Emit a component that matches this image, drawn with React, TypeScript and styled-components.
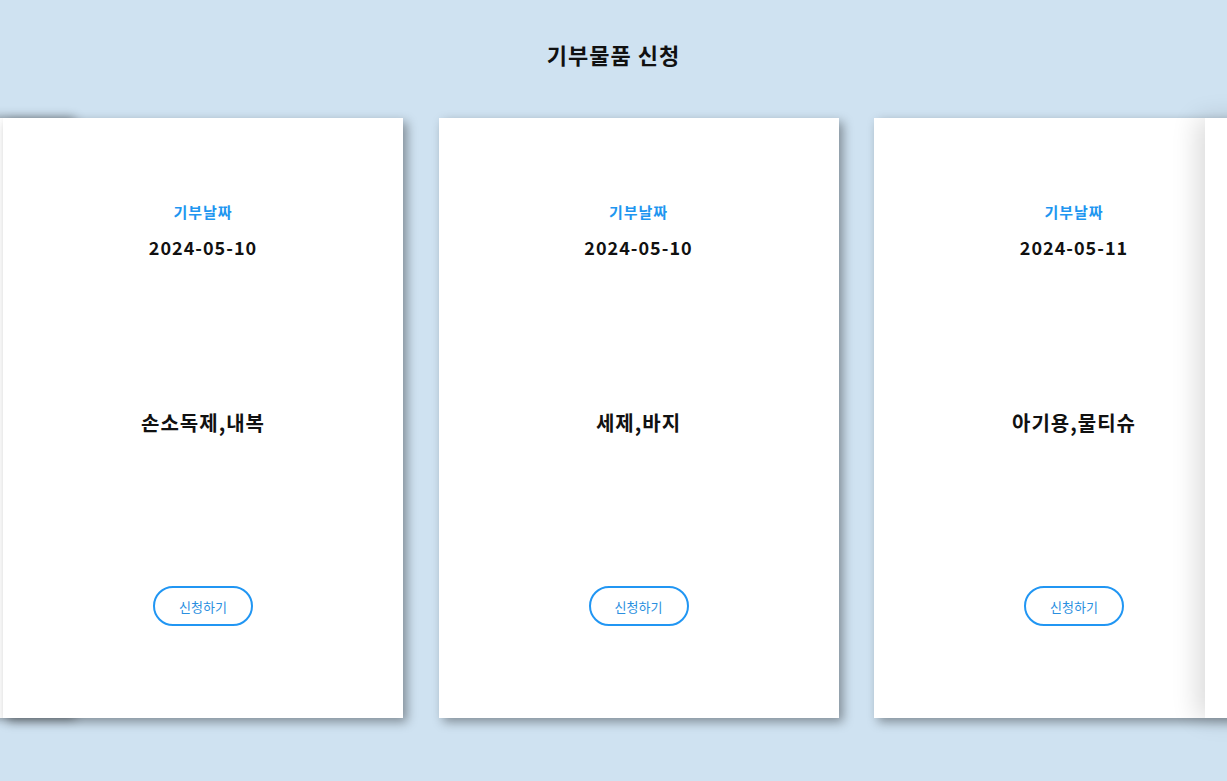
import React from 'react'
import styled, { createGlobalStyle } from 'styled-components'

const GlobalStyle = createGlobalStyle`
  html, body {
    margin: 0;
    padding: 0;
    background: #cfe2f1;
    font-family: 'Noto Sans CJK KR', 'Noto Sans', sans-serif;
  }
`

const Page = styled.div`
  width: 100%;
  height: 781px;
  background: #cfe2f1;
  overflow: hidden;
`

const Title = styled.h1`
  margin: 0;
  padding-top: 38px;
  height: 118px;
  box-sizing: border-box;
  text-align: center;
  font-size: 22px;
  line-height: 32px;
  font-weight: 700;
  letter-spacing: 1px;
  color: #111;
`

const Track = styled.div`
  position: relative;
  display: flex;
  gap: 35.5px;
  padding-left: 3px;
  height: 620px;
`

const Card = styled.div`
  position: relative;
  z-index: 2;
  flex: 0 0 400px;
  height: 600px;
  background: #fff;
  box-shadow: 4px 4px 10px rgba(0, 0, 0, 0.38);
  display: flex;
  flex-direction: column;
  align-items: center;
  padding-top: 84px;
  box-sizing: border-box;
`

const BackCard = styled.div<{ $side: 'left' | 'right' }>`
  position: absolute;
  top: 0;
  height: 600px;
  width: 400px;
  background: #fff;
  ${({ $side }) =>
    $side === 'left'
      ? `left: -325px; z-index: 1; box-shadow: 0 0 10px rgba(0, 0, 0, 0.45);`
      : `left: 1205px; z-index: 3; box-shadow: -8px 0 24px rgba(0, 0, 0, 0.14);`}
`

const Label = styled.div`
  font-size: 15px;
  line-height: 20px;
  font-weight: 700;
  letter-spacing: 1px;
  color: #1e96f0;
`

const DateText = styled.div`
  margin-top: 13px;
  font-size: 18px;
  line-height: 24px;
  font-weight: 700;
  color: #111;
  letter-spacing: 1px;
`

const Items = styled.div`
  margin-top: 150px;
  font-size: 20px;
  line-height: 28px;
  font-weight: 700;
  letter-spacing: 1px;
  color: #111;
`

const ApplyButton = styled.button`
  margin-top: 149px;
  width: 100px;
  height: 40px;
  border: 2px solid #2196f3;
  border-radius: 20px;
  background: #fff;
  color: #2a8fe0;
  font-family: 'Noto Sans CJK KR', 'Noto Sans', sans-serif;
  font-size: 13px;
  cursor: pointer;
`

const donations = [
  { date: '2024-05-10', items: '손소독제,내복' },
  { date: '2024-05-10', items: '세제,바지' },
  { date: '2024-05-11', items: '아기용,물티슈' },
]

export default function App() {
  return (
    <Page>
      <GlobalStyle />
      <Title>기부물품 신청</Title>
      <Track>
        <BackCard $side="left" />
        {donations.map((d, i) => (
          <Card key={i}>
            <Label>기부날짜</Label>
            <DateText>{d.date}</DateText>
            <Items>{d.items}</Items>
            <ApplyButton>신청하기</ApplyButton>
          </Card>
        ))}
        <BackCard $side="right" />
      </Track>
    </Page>
  )
}
